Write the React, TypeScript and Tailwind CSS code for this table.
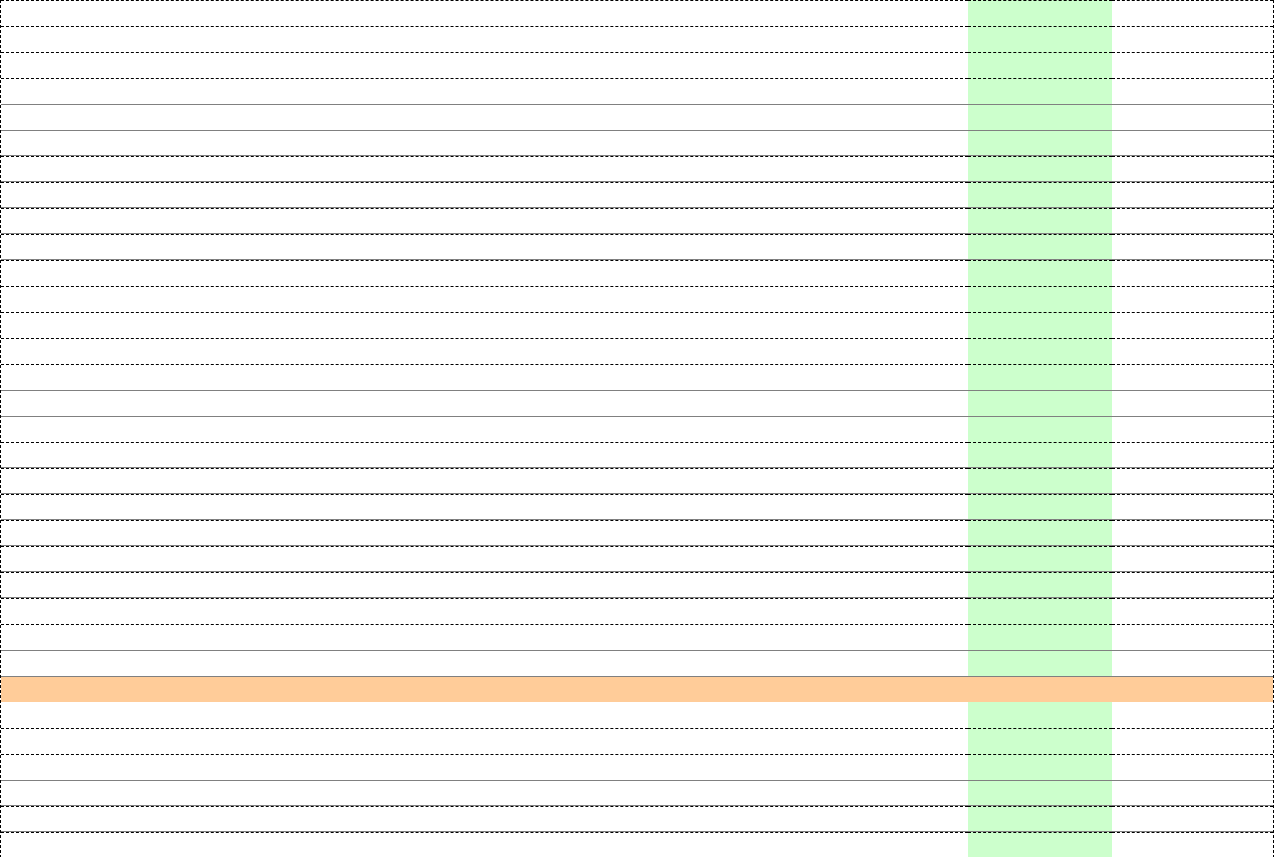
type Line = 'dashed' | 'solid' | 'combo' | 'none';

// top border of each 26px row, read off the sheet
const lines: Line[] = [
  'dashed', 'dashed', 'dashed', 'dashed', 'solid', 'solid',
  'combo', 'combo', 'combo', 'combo', 'combo',
  'dashed', 'dashed', 'dashed', 'dashed', 'solid', 'solid', 'dashed',
  'combo', 'combo', 'combo', 'combo', 'combo', 'combo',
  'dashed', 'solid', 'solid', 'none', 'dashed', 'dashed', 'solid',
  'combo', 'combo',
];

const ORANGE_ROW = 26;

function lineClass(line: Line) {
  if (line === 'dashed') return 'border-t border-dashed border-black';
  if (line === 'solid') return 'border-t border-solid border-[#808080]';
  if (line === 'combo') return 'border-t border-dashed border-black shadow-[0_-1px_0_#808080]';
  return '';
}

function Row({ index, line }: { index: number; line: Line }) {
  const orange = index === ORANGE_ROW;
  const border = lineClass(line);
  return (
    <div className="flex h-[26px] shrink-0">
      <div className={`w-[967px] h-full ${border} ${orange ? 'bg-[#ffcc99]' : 'bg-white'}`} />
      <div className={`w-[144px] h-full ${border} ${orange ? 'bg-[#ffcc99]' : 'bg-[#ccffcc]'}`} />
      <div className={`flex-1 h-full ${border} ${orange ? 'bg-[#ffcc99]' : 'bg-white'}`} />
    </div>
  );
}

export default function App() {
  return (
    <div className="h-[857px] w-[1274px] overflow-hidden bg-white">
      <div className="flex w-[1274px] flex-col border-x border-dashed border-black">
        {lines.map((line, i) => (
          <Row key={i} index={i} line={line} />
        ))}
      </div>
    </div>
  );
}
